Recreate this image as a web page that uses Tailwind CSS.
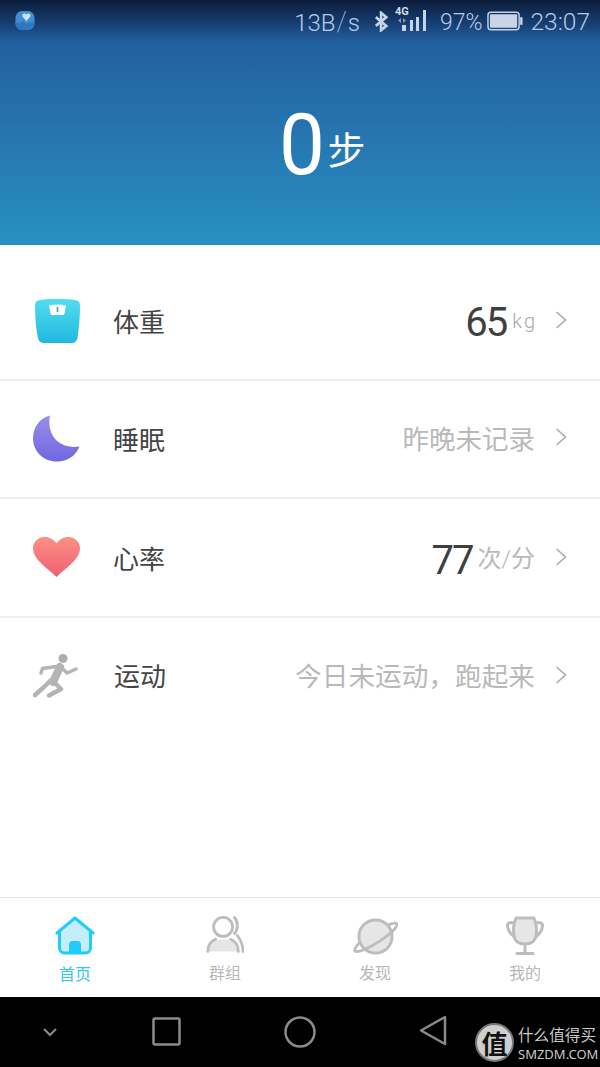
<!DOCTYPE html>
<html lang="zh"><head><meta charset="utf-8">
<script src="https://cdn.jsdelivr.net/npm/@tailwindcss/browser@4"></script>
</head>
<body class="bg-white">
<div class="w-[600px] h-[1067px] flex flex-col overflow-hidden font-['Roboto','Noto_Sans_CJK_SC',sans-serif]">
  <!-- header -->
  <div class="h-[245px] shrink-0 flex flex-col bg-[linear-gradient(180deg,#0c1c3a_0px,#173f74_24px,#22609f_42px,#2674b0_130px,#2890c0_245px)]">
    <div class="h-[44px] flex items-center pl-[15px] pr-[10px] text-[#b9cbe4]">
      <svg class="w-[20px] h-[21px] mb-[3px]" viewBox="0 0 21 21"><rect x="0.500" y="0.500" width="20" height="20" rx="7" fill="#3f8fd6"/><path d="M.5 12l5 1 3-3 3 4 3-2 6 1v1a7 7 0 0 1-7 6.500H7a7 7 0 0 1-6.500-6.500z" fill="#2f78bd"/><path d="M12 11 8 6.500C7 3 10.500 2 12 4.500 13.500 2 17 3 16 6.500z" fill="#cfe4f6"/></svg>
      <span class="ml-auto text-[24px] font-light leading-none mb-[-1px]">13B<span class="text-[27px] font-thin mx-[1px]">/</span>s</span>
      <svg class="w-[15px] h-[21px] ml-[14px] mb-[1px]" viewBox="0 0 16 24" fill="none" stroke="#c4d3e8" stroke-width="3"><path d="M1.500 7l12 10-6 5V2l6 5-12 10"/></svg>
      <div class="relative w-[32px] h-[30px] ml-[6px] mb-[4px]">
        <span class="absolute left-[0px] top-[1px] text-[11px] font-bold leading-none text-[#d2dcec]">4G</span>
        <svg class="absolute left-0 top-0 w-[32px] h-[30px]" viewBox="0 0 32 30" fill="#c4d3e8"><rect x="7" y="20" width="4" height="6"/><rect x="15" y="15" width="3" height="11"/><rect x="21" y="12" width="3" height="14"/><rect x="28" y="5" width="3" height="21"/><path d="M6 13v5l-3-2.500zM8 13v5l3-2.500z" fill="#7d97b8"/></svg>
      </div>
      <span class="ml-[13px] text-[23px] font-light leading-none mb-[-1px]">97%</span>
      <svg class="w-[37px] h-[20px] ml-[5px] mb-[3px]" viewBox="0 0 38 20"><rect x="1" y="1" width="32" height="18" rx="3" fill="none" stroke="#c4d3e8" stroke-width="1.500"/><rect x="3" y="3" width="28" height="14" rx="1" fill="#c9d5e6"/><rect x="34" y="6" width="2.500" height="8" rx="1" fill="#c4d3e8"/></svg>
      <span class="ml-[6px] text-[24.500px] font-light leading-none mb-[-1px]">23:07</span>
    </div>
    <div class="flex items-center justify-center text-white pt-[56px] pl-[44px]">
      <span class="text-[86px] leading-[90px] font-normal scale-x-[0.95] w-[44px] text-center">0</span>
      <span class="text-[38px] leading-none ml-[5px] mt-[6px] font-['Noto_Sans_CJK_SC',sans-serif]">步</span>
    </div>
  </div>

  <!-- rows -->
  <div class="flex-1 flex flex-col pt-[18px]">
    <div class="h-[118px] shrink-0 flex items-center pl-[35px] pr-[33px] border-b-2 border-[#e8f0f6]">
      <svg class="w-[45px] h-[45px] mt-[1px]" viewBox="0 0 45 45"><defs><linearGradient id="a" x1="0" y1="0" x2="0" y2="1"><stop offset="0" stop-color="#52def0"/><stop offset="1" stop-color="#21b8e0"/></linearGradient></defs><path d="M0 6C0 3 2 1.500 5 1 16-.5 29-.5 40 1c3 .5 5 2 5 5 0 12-1 24-2.500 33-.5 3-3 5-6 5H9c-3 0-5.500-2-6-5C1 30 0 18 0 6z" fill="url(#a)"/><path d="M14 6.500c6-1.500 11-1.500 17 0l-1.500 8c-.2 1-1 1.500-2 1.500h-10c-1 0-1.800-.5-2-1.500z" fill="#fff"/><rect x="21.700" y="8" width="1.600" height="5" fill="#2aa9cf"/></svg>
      <span class="ml-[33px] text-[26px] text-[#444] leading-none mt-[3px]">体重</span>
      <span class="ml-auto text-[40px] text-[#3f3f3f] leading-none tracking-[-2px] mt-[3px]">65</span>
      <span class="ml-[6px] text-[20px] font-light text-[#a8a8a8] leading-none tracking-[2px] mb-[1px]">kg</span>
      <svg class="w-[12px] h-[20px] ml-[18px] mb-[3px]" viewBox="0 0 12 20" fill="none" stroke="#a8a8a8" stroke-width="1.500"><path d="M1.500 2l9 8-9 8"/></svg>
    </div>
    <div class="h-[118px] shrink-0 flex items-center pl-[33px] pr-[33px] border-b-2 border-[#e8f0f6]">
      <svg class="w-[47px] h-[47px] mb-[1px]" viewBox="0 0 47 47"><defs><linearGradient id="b" x1="0" y1="0" x2="0" y2="1"><stop offset="0" stop-color="#9b8ceb"/><stop offset="1" stop-color="#6f68e0"/></linearGradient></defs><path d="M17 .5C15 10 17.500 20 24 26c6 5 14 7 22.500 5.500C43 41 34 46.500 24 46.500 10 46.500 0 36 0 23.500 0 12 7 3 17 .5z" fill="url(#b)"/></svg>
      <span class="ml-[33px] text-[26px] text-[#444] leading-none mt-[3px]">睡眠</span>
      <span class="ml-auto text-[26.500px] text-[#b9b9b9] leading-none mt-[3px]">昨晚未记录</span>
      <svg class="w-[12px] h-[20px] ml-[20px] mb-[4px]" viewBox="0 0 12 20" fill="none" stroke="#a8a8a8" stroke-width="1.500"><path d="M1.500 2l9 8-9 8"/></svg>
    </div>
    <div class="h-[119px] shrink-0 flex items-center pl-[33px] pr-[33px] border-b-2 border-[#e8f0f6]">
      <svg class="w-[47px] h-[40px] mb-[1px]" viewBox="0 0 47 40"><defs><linearGradient id="c" x1="0" y1="0" x2="0" y2="1"><stop offset="0" stop-color="#fb9085"/><stop offset="1" stop-color="#ef5f72"/></linearGradient></defs><path d="M23.500 40C17 33 0 23 0 11.500 0 4.500 5.500 0 11.500 0c5 0 9.500 2.500 12 6.500C26 2.500 30.500 0 35.500 0 41.500 0 47 4.500 47 11.500 47 23 30 33 23.500 40z" fill="url(#c)"/></svg>
      <span class="ml-[33px] text-[26px] text-[#444] leading-none mt-[5px]">心率</span>
      <span class="ml-auto text-[40px] text-[#3f3f3f] leading-none tracking-[-2px] mt-[6px]">77</span>
      <span class="ml-[5px] text-[24px] text-[#b9b9b9] leading-none mt-[3px]">次<span class="font-light">/</span>分</span>
      <svg class="w-[12px] h-[20px] ml-[20px] mb-[1px]" viewBox="0 0 12 20" fill="none" stroke="#a8a8a8" stroke-width="1.500"><path d="M1.500 2l9 8-9 8"/></svg>
    </div>
    <div class="h-[118px] shrink-0 flex items-center pl-[33px] pr-[33px]">
      <svg class="w-[46px] h-[44px] mb-[2px]" viewBox="0 0 46 44"><circle cx="30" cy="4.500" r="4.500" fill="#aeaeae"/><path d="M8 19 9.500 14.500 27 12l7 7 9-4" fill="none" stroke="#b4b4b4" stroke-width="3.500" stroke-linecap="round" stroke-linejoin="round"/><path d="M27 13 20 28" fill="none" stroke="#b4b4b4" stroke-width="8" stroke-linecap="round"/><path d="M17 27l-6 6-9 8" fill="none" stroke="#b4b4b4" stroke-width="4.500" stroke-linecap="round" stroke-linejoin="round"/><path d="M21 28l7 7-12 6.500" fill="none" stroke="#b4b4b4" stroke-width="4.500" stroke-linecap="round" stroke-linejoin="round"/></svg>
      <span class="ml-[35px] text-[26px] text-[#444] leading-none">运动</span>
      <span class="ml-auto text-[26.670px] text-[#b9b9b9] leading-none">今日未运动，跑起来</span>
      <svg class="w-[12px] h-[20px] ml-[20px] mb-[4px]" viewBox="0 0 12 20" fill="none" stroke="#a8a8a8" stroke-width="1.500"><path d="M1.500 2l9 8-9 8"/></svg>
    </div>
  </div>

  <!-- tabs -->
  <div class="h-[100px] shrink-0 grid grid-cols-4 border-t border-[#e4e4e4] bg-white text-[16px] leading-none text-[#b7b7b7]">
    <div class="flex flex-col items-center pt-[18px]">
      <svg class="w-[40px] h-[39px]" viewBox="0 0 40 39"><path d="M4 17 20 3l16 14v15a5 5 0 0 1-5 5H9a5 5 0 0 1-5-5z" fill="#c4eefb"/><path d="M14 37V29c0-2 1-4 3-4h6c2 0 3 2 3 4v8z" fill="#22ccfa"/><path d="M2 17 20 2l18 15M4.500 16v16a5 5 0 0 0 5 5h21a5 5 0 0 0 5-5V16" fill="none" stroke="#22ccfa" stroke-width="3" stroke-linecap="round" stroke-linejoin="round"/></svg>
      <span class="mt-[12px] text-[#35c5f0]">首页</span>
    </div>
    <div class="flex flex-col items-center pt-[17px]">
      <svg class="w-[38px] h-[39px]" viewBox="0 0 40 40"><path d="M2 38c0-9 5-13 16-13s16 4 16 13z" fill="#e6e6e6"/><circle cx="18" cy="12" r="10" fill="#fff" stroke="#bdbdbd" stroke-width="3"/><path d="M2 38c0-7 3-11 8-13M34 38c0-7-3-11-8-13M30 2c4 4 4 13 0 17M33 21c3 4 6 10 6 17" fill="none" stroke="#bdbdbd" stroke-width="3" stroke-linecap="round"/></svg>
      <span class="mt-[12px]">群组</span>
    </div>
    <div class="flex flex-col items-center pt-[20px]">
      <svg class="w-[45px] h-[37px]" viewBox="0 0 46 38"><circle cx="23" cy="19" r="17" fill="#e6e6e6" stroke="#bdbdbd" stroke-width="3"/><path d="M36 7c5-2 8-2 9-1 1 3-7 11-18 18S5 36 2 34c-1-2 1-5 5-9" fill="none" stroke="#bdbdbd" stroke-width="3" stroke-linecap="round"/></svg>
      <span class="mt-[11px]">发现</span>
    </div>
    <div class="flex flex-col items-center pt-[18px]">
      <svg class="w-[38px] h-[39px]" viewBox="0 0 38 39"><path d="M10 2h18c3 7 3 12 2 18-1 6-6 8-11 8s-10-2-11-8c-1-6-1-11 2-18z" fill="#e6e6e6" stroke="#bdbdbd" stroke-width="3" stroke-linejoin="round"/><path d="M8 7C4 6 1 7 1.500 10c.5 5 3 8 7 11M30 7c4-1 7 0 6.500 3-.5 5-3 8-7 11" fill="none" stroke="#bdbdbd" stroke-width="3"/><path d="M19 28v8" stroke="#bdbdbd" stroke-width="3"/><path d="M11 37.500h16" stroke="#bdbdbd" stroke-width="3" stroke-linecap="round"/></svg>
      <span class="mt-[11px]">我的</span>
    </div>
  </div>

  <!-- nav -->
  <div class="h-[70px] shrink-0 bg-black relative flex items-center">
    <div class="flex items-center pb-[1px] w-full">
      <svg class="ml-[42px] w-[16px] h-[12px]" viewBox="0 0 16 12" fill="none" stroke="#8a8a8a" stroke-width="2"><path d="M2 3l6 6 6-6"/></svg>
      <svg class="ml-[94px] w-[29px] h-[29px]" viewBox="0 0 29 29" fill="none" stroke="#8a8a8a" stroke-width="2.500"><rect x="1.500" y="1.500" width="26" height="26" rx="1.500"/></svg>
      <svg class="ml-[103px] w-[32px] h-[32px]" viewBox="0 0 32 32" fill="none" stroke="#8a8a8a" stroke-width="2.500"><circle cx="16" cy="16" r="14.500"/></svg>
      <svg class="ml-[103px] w-[28px] h-[31px] mb-[3px]" viewBox="0 0 28 31" fill="none" stroke="#8a8a8a" stroke-width="2.500" stroke-linejoin="round"><path d="M26 2v27L2 15.500z"/></svg>
    </div>
    <div class="absolute left-[475px] top-[26px] flex items-center">
      <div class="w-[39px] h-[39px] rounded-full bg-[#cfcfcf] border-2 border-[#777] flex items-center justify-center text-[26px] leading-none text-[#111] font-['Noto_Sans_CJK_SC',sans-serif] font-bold">值</div>
      <div class="ml-[4px] flex flex-col text-[#c8c8c8]">
        <span class="text-[15.600px] leading-[18px] font-['Noto_Sans_CJK_SC',sans-serif] whitespace-nowrap">什么值得买</span>
        <span class="text-[13px] leading-[14px] mt-[4px] font-['Noto_Sans',sans-serif] whitespace-nowrap">SMZDM.COM</span>
      </div>
    </div>
  </div>
</div>
</body></html>
